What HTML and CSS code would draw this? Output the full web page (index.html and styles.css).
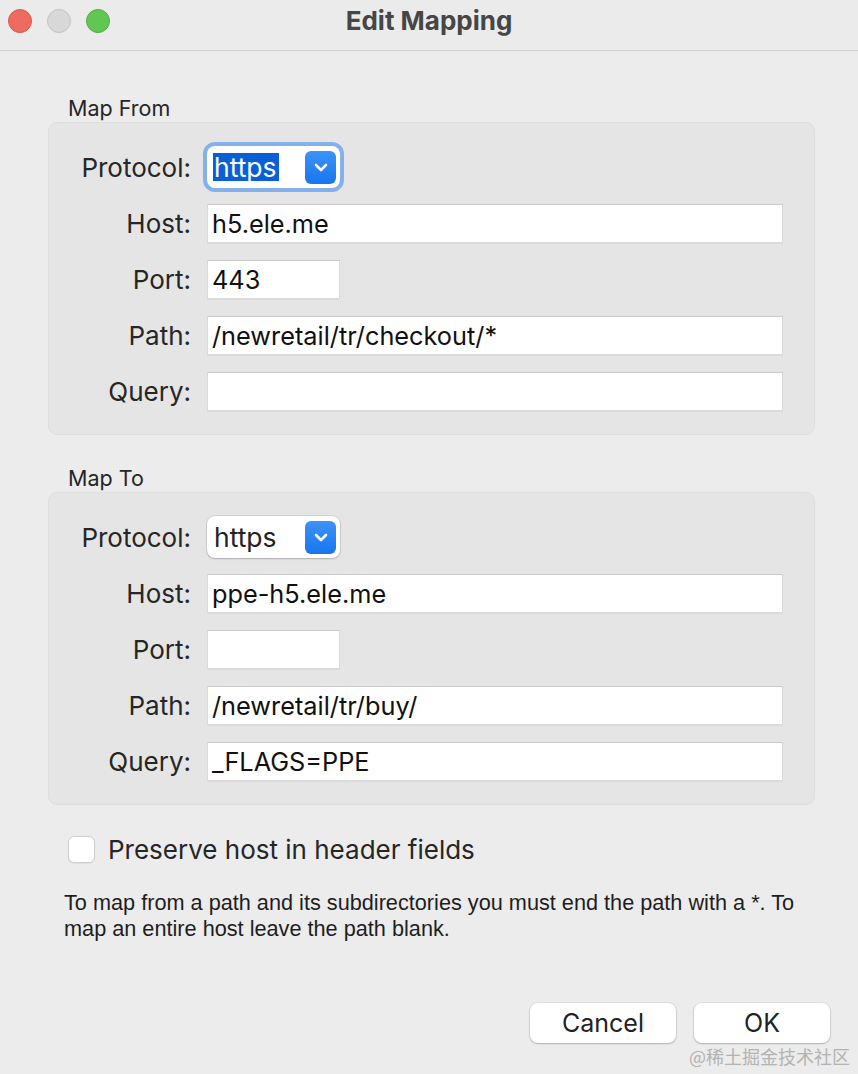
FILE: index.html
```html
<!DOCTYPE html>
<html lang="en">
<head>
<meta charset="utf-8">
<title>Edit Mapping</title>
<link rel="stylesheet" href="styles.css">
</head>
<body>
<div class="window">
  <header class="titlebar">
    <div class="lights">
      <span class="light red"></span>
      <span class="light gray"></span>
      <span class="light green"></span>
    </div>
    <h1 class="title">Edit Mapping</h1>
    <div></div>
  </header>

  <main class="content">
    <section class="section">
      <div class="section-label">Map From</div>
      <div class="group">
        <label class="lbl">Protocol:</label>
        <div class="select focused">
          <span class="select-text"><span class="selected">https</span></span>
          <span class="select-btn"><svg width="14" height="9" viewBox="0 0 14 9"><path d="M2 2 L7 7 L12 2" fill="none" stroke="#fff" stroke-width="2.6" stroke-linecap="round" stroke-linejoin="round"/></svg></span>
        </div>
        <label class="lbl">Host:</label>
        <div class="field">h5.ele.me</div>
        <label class="lbl">Port:</label>
        <div class="field short">443</div>
        <label class="lbl">Path:</label>
        <div class="field">/newretail/tr/checkout/*</div>
        <label class="lbl">Query:</label>
        <div class="field"></div>
      </div>
    </section>

    <section class="section second">
      <div class="section-label">Map To</div>
      <div class="group">
        <label class="lbl">Protocol:</label>
        <div class="select">
          <span class="select-text">https</span>
          <span class="select-btn"><svg width="14" height="9" viewBox="0 0 14 9"><path d="M2 2 L7 7 L12 2" fill="none" stroke="#fff" stroke-width="2.6" stroke-linecap="round" stroke-linejoin="round"/></svg></span>
        </div>
        <label class="lbl">Host:</label>
        <div class="field">ppe-h5.ele.me</div>
        <label class="lbl">Port:</label>
        <div class="field short"></div>
        <label class="lbl">Path:</label>
        <div class="field">/newretail/tr/buy/</div>
        <label class="lbl">Query:</label>
        <div class="field">_FLAGS=PPE</div>
      </div>
    </section>

    <div class="check-row">
      <span class="checkbox"></span>
      <span class="check-text">Preserve host in header fields</span>
    </div>

    <p class="help">To map from a path and its subdirectories you must end the path with a *. To<br>map an entire host leave the path blank.</p>

    <div class="buttons">
      <button class="btn cancel">Cancel</button>
      <button class="btn ok">OK</button>
    </div>
  </main>
  <div class="watermark">@稀土掘金技术社区</div>
</div>
</body>
</html>
```

FILE: styles.css
```css
* { box-sizing: border-box; }
html, body { margin: 0; padding: 0; }
body {
  background: #ececec;
  font-family: Inter, "Liberation Sans", sans-serif;
  color: #222;
}
.window {
  position: relative;
  width: 858px;
  height: 1074px;
  overflow: hidden;
  background: #ececec;
}
.titlebar {
  height: 51px;
  display: grid;
  grid-template-columns: 1fr auto 1fr;
  align-items: center;
  border-bottom: 1px solid #d2d2d2;
  background: #ebebeb;
}
.lights {
  display: flex;
  gap: 15px;
  padding-left: 8px;
  align-self: start;
  padding-top: 9px;
}
.light {
  width: 24px;
  height: 24px;
  border-radius: 50%;
  display: block;
}
.red { background: #ee6b60; border: 1px solid #d9574c; }
.gray { background: #d8d8d8; border: 1px solid #c3c3c3; }
.green { background: #62c655; border: 1px solid #4eae43; }
.title {
  margin: 0;
  font-size: 26px;
  font-weight: 700;
  color: #464646;
  margin-top: -9px;
}
.content {
  padding: 45px 43px 0 48px;
}
.section-label {
  font-size: 21.5px;
  line-height: 24px;
  margin: 0 0 2px 20px;
  color: #262626;
}
.second { margin-top: 31px; }
.group {
  background: #e5e5e5;
  border: 1px solid #dedede;
  border-radius: 9px;
  padding: 24px 31px 23px 0;
  display: grid;
  grid-template-columns: 142px 1fr;
  grid-auto-rows: 40px;
  column-gap: 16px;
  row-gap: 16px;
  align-items: center;
}
.lbl {
  text-align: right;
  font-size: 26px;
  color: #262626;
}
.field {
  height: 39px;
  background: #fff;
  border: 1px solid #d9d9d9;
  border-top-color: #c9c9c9;
  box-shadow: 0 1px 0 rgba(0,0,0,0.04);
  font-family: Inter, "Liberation Sans", sans-serif;
  font-size: 25.3px;
  line-height: 38px;
  padding-left: 4px;
  color: #111;
}
.field.short { width: 133px; }
.select {
  width: 133px;
  height: 42px;
  background: #fff;
  border-radius: 8px;
  box-shadow: 0 0 0 1px rgba(0,0,0,0.08), 0 1px 2px rgba(0,0,0,0.18);
  display: flex;
  align-items: center;
  justify-content: space-between;
  padding: 0 4px 0 7px;
}
.select.focused {
  box-shadow: 0 0 0 4px #84b1ec;
}
.select-text {
  font-size: 26.5px;
  color: #222;
  line-height: 28px;
}
.selected {
  background: #0b5fd6;
  color: #fff;
  display: inline-block;
  padding-right: 2px;
  margin-left: -1px;
  padding-left: 1px;
}
.select-btn {
  width: 31px;
  height: 33px;
  border-radius: 6px;
  background: linear-gradient(#3d93f8, #1776ee);
  display: flex;
  align-items: center;
  justify-content: center;
}
.check-row {
  margin-top: 30px;
  margin-left: 20px;
  display: flex;
  align-items: center;
  gap: 13px;
  height: 28px;
}
.checkbox {
  width: 27px;
  height: 27px;
  border-radius: 6px;
  background: #fff;
  border: 1px solid #cdcdcd;
  box-shadow: 0 1px 1px rgba(0,0,0,0.05);
}
.check-text {
  font-size: 26px;
  color: #262626;
}
.help {
  margin: 27px 0 0 16px;
  font-family: "Liberation Sans", Arial, sans-serif;
  font-size: 21.7px;
  line-height: 26px;
  color: #1e1e1e;
  white-space: nowrap;
}
.buttons {
  margin-top: 61px;
  display: flex;
  justify-content: flex-end;
  gap: 18px;
  margin-right: -15px;
}
.btn {
  height: 40px;
  border: none;
  border-radius: 8px;
  background: #fff;
  box-shadow: 0 0 0 1px rgba(0,0,0,0.06), 0 1px 2px rgba(0,0,0,0.22);
  font-family: Inter, "Liberation Sans", sans-serif;
  font-size: 25px;
  color: #222;
  padding: 0;
}
.cancel { width: 146px; }
.ok { width: 136px; }
.watermark {
  position: absolute;
  right: 8px;
  bottom: 5px;
  font-family: "Noto Sans CJK SC", sans-serif;
  font-size: 18px;
  color: #b3b3b3;
}
```
